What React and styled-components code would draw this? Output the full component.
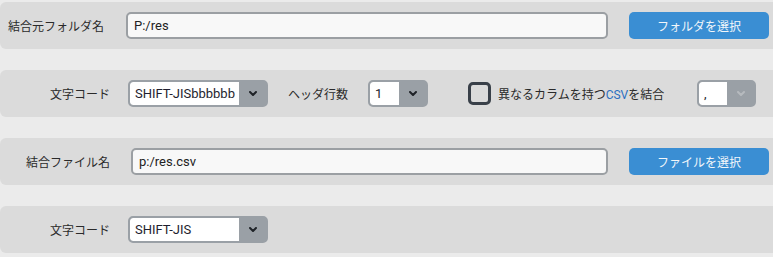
import React from "react";
import styled, { createGlobalStyle } from "styled-components";

const GlobalStyle = createGlobalStyle`
  html, body {
    margin: 0;
    padding: 0;
    background: #ebebeb;
    font-family: Roboto, "Liberation Sans", "Noto Sans CJK JP", sans-serif;
    overflow: hidden;
  }
`;

const Page = styled.div`
  width: 773px;
  padding-top: 2px;
  display: flex;
  flex-direction: column;
  gap: 21px;
`;

const Panel = styled.div`
  height: 47px;
  background: #dbdbdb;
  border-radius: 6px 0 0 6px;
  display: flex;
  align-items: center;
  padding-left: ${(p) => p.$pad || 8}px;
  box-sizing: border-box;
`;

const Label = styled.span`
  width: ${(p) => p.$w}px;
  flex-shrink: 0;
  text-align: ${(p) => p.$align || "right"};
  font-family: "Noto Sans CJK JP", sans-serif;
  font-size: 12px;
  color: #2a2a2a;
  margin-left: ${(p) => p.$ml || 0}px;
  margin-right: ${(p) => p.$mr || 0}px;
  white-space: nowrap;
`;

const TextInput = styled.div`
  width: ${(p) => p.$w}px;
  height: 27px;
  box-sizing: border-box;
  border: 2px solid #9b9fa3;
  border-radius: 5px;
  background: #f8f8f8;
  display: flex;
  align-items: center;
  padding-left: 6px;
  font-size: 13px;
  color: #222;
`;

const Button = styled.div`
  width: 140px;
  height: 27px;
  margin-left: 21px;
  border-radius: 5px;
  background: #3a8ed3;
  color: #f2f6fa;
  font-family: "Noto Sans CJK JP", sans-serif;
  font-size: 12px;
  display: flex;
  align-items: center;
  justify-content: center;
`;

const SelectBox = styled.div`
  width: ${(p) => p.$w}px;
  height: 27px;
  box-sizing: border-box;
  border: 2px solid #9aa0a6;
  border-radius: 5px;
  background: #9aa0a6;
  display: flex;
  overflow: hidden;
  margin-left: ${(p) => p.$ml || 0}px;
  flex-shrink: 0;
`;

const SelectValue = styled.div`
  flex: 1;
  background: #fff;
  border-radius: 3px 0 0 3px;
  display: flex;
  align-items: center;
  padding-left: 5px;
  font-size: 13px;
  color: #1e1e2e;
  overflow: hidden;
  white-space: nowrap;
`;

const Arrow = styled.div`
  width: 27px;
  display: flex;
  align-items: center;
  justify-content: center;
  color: ${(p) => (p.$dim ? "#b6babe" : "#1f2328")};
`;

const Check = styled.div`
  width: 23px;
  height: 23px;
  box-sizing: border-box;
  border: 3px solid #394049;
  border-radius: 5px;
  margin-left: 40px;
  flex-shrink: 0;
`;

const Blue = styled.span`
  color: #2a6fc0;
  font-family: Roboto, "Liberation Sans", sans-serif;
`;

const Chevron = () => (
  <svg width="8" height="5" viewBox="0 0 8 5">
    <polyline
      points="1,1 4,4 7,1"
      fill="none"
      stroke="currentColor"
      strokeWidth="2"
      strokeLinecap="round"
      strokeLinejoin="round"
    />
  </svg>
);

const Select = ({ w, ml, value, dim }) => (
  <SelectBox $w={w} $ml={ml}>
    <SelectValue>{value}</SelectValue>
    <Arrow $dim={dim}>
      <Chevron />
    </Arrow>
  </SelectBox>
);

export default function App() {
  return (
    <>
      <GlobalStyle />
      <Page>
        <Panel>
          <Label $w={118} $align="left">結合元フォルダ名</Label>
          <TextInput $w={482}>P:/res</TextInput>
          <Button>フォルダを選択</Button>
        </Panel>
        <Panel>
          <Label $w={102} $mr={18}>文字コード</Label>
          <Select w={140} value="SHIFT-JISbbbbbb" />
          <Label $w={60} $ml={20} $align="left">ヘッダ行数</Label>
          <Select w={60} ml={20} value="1" />
          <Check />
          <Label $w={170} $ml={7} $align="left">
            異なるカラムを持つ<Blue>CSV</Blue>を結合
          </Label>
          <Select w={59} ml={29} value="," dim />
        </Panel>
        <Panel>
          <Label $w={102} $mr={21}>結合ファイル名</Label>
          <TextInput $w={477}>p:/res.csv</TextInput>
          <Button>ファイルを選択</Button>
        </Panel>
        <Panel>
          <Label $w={102} $mr={18}>文字コード</Label>
          <Select w={140} value="SHIFT-JIS" />
        </Panel>
      </Page>
    </>
  );
}
